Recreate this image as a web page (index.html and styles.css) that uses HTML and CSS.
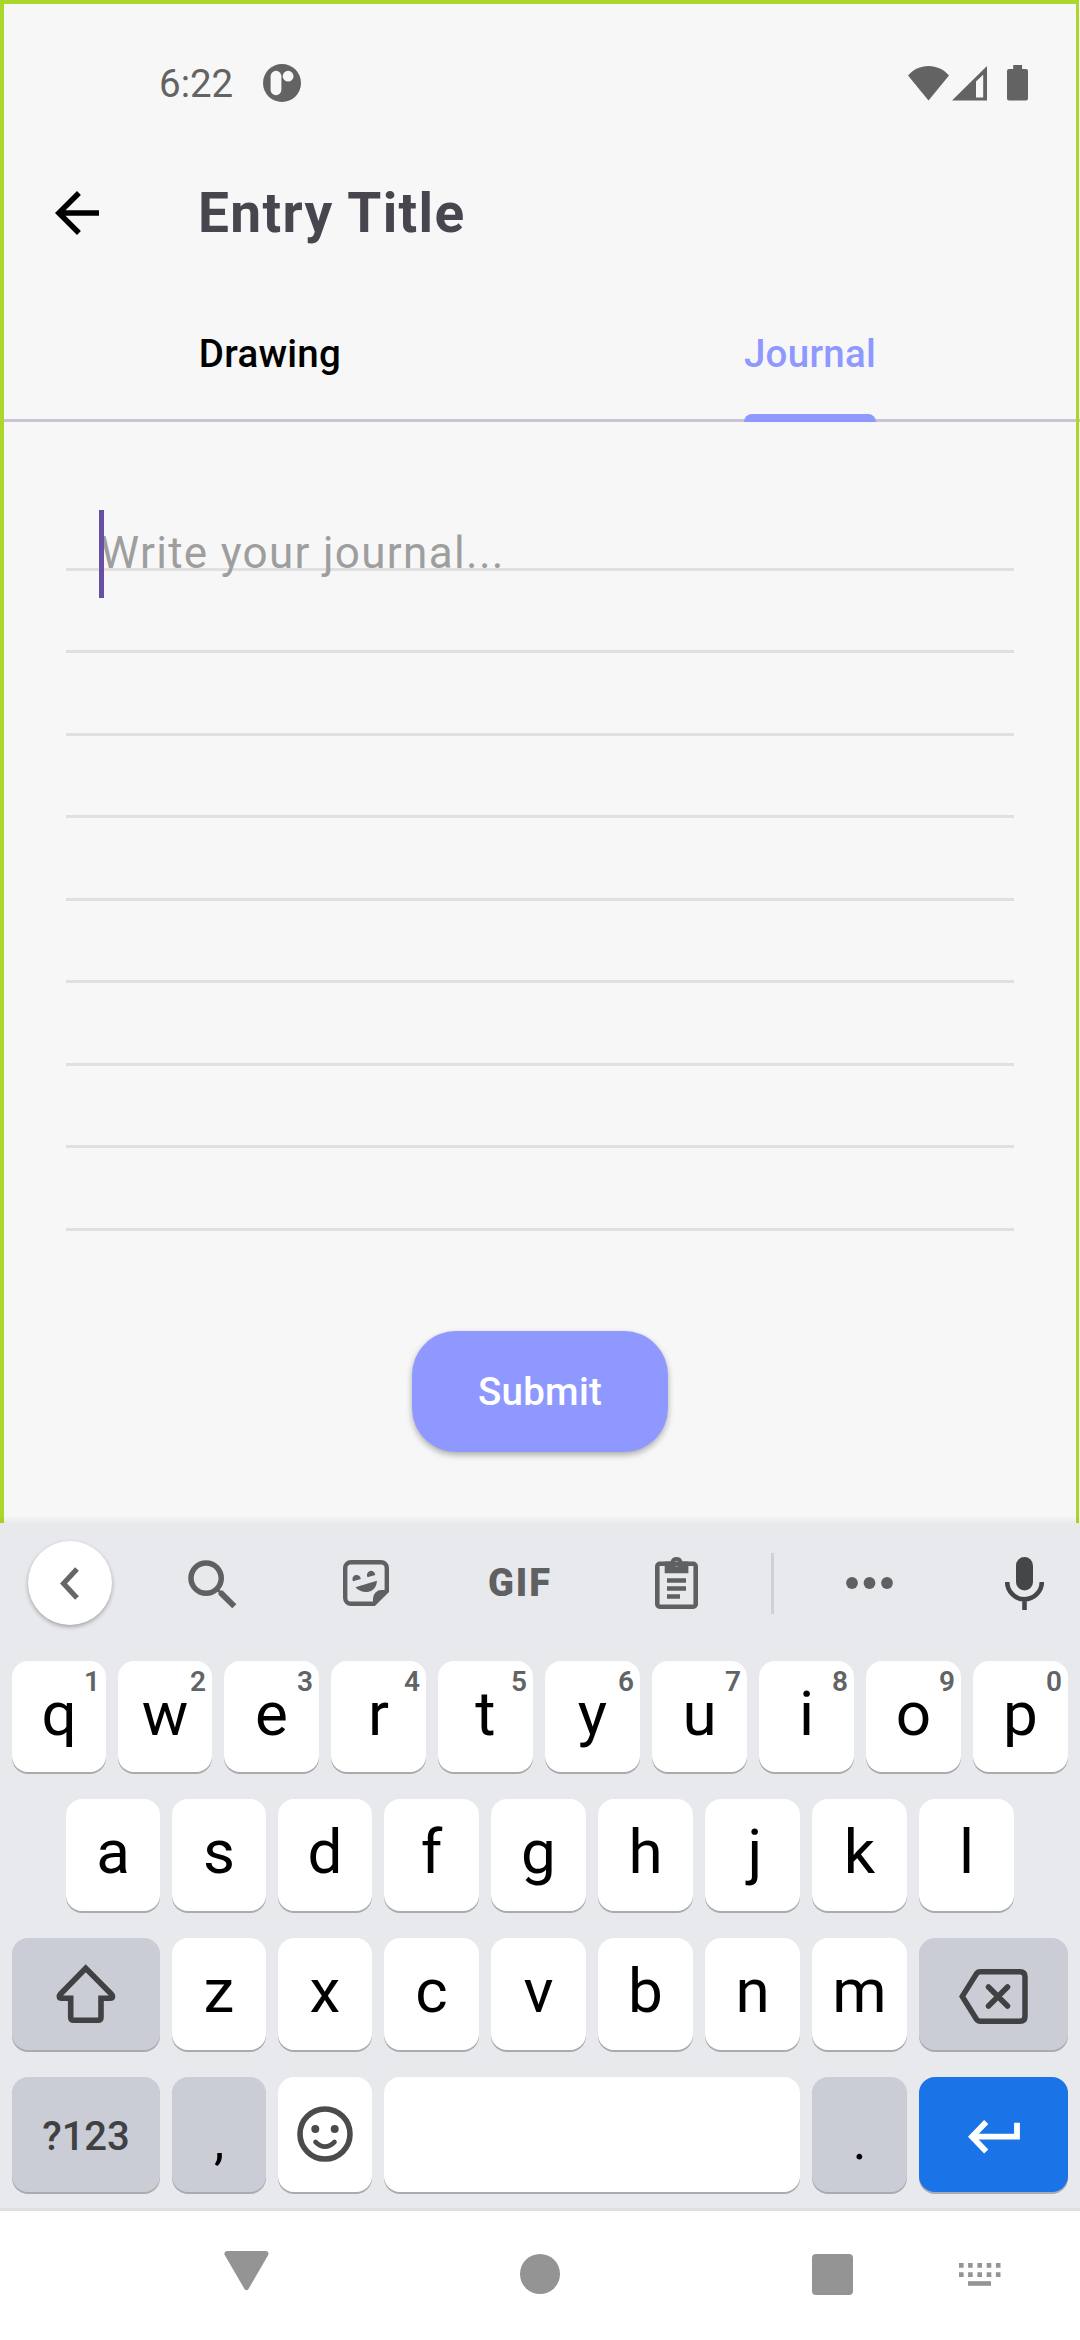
FILE: index.html
```html
<!DOCTYPE html>
<html lang="en">
<head>
<meta charset="utf-8">
<title>Entry Title</title>
<link rel="stylesheet" href="styles.css">
</head>
<body>
<div class="phone">
  <div class="app">
    <header class="status">
      <span class="clock">6:22</span>
      <svg class="notif" width="38" height="38" viewBox="0 0 38 38"><circle cx="19" cy="19" r="19" fill="#636363"/><rect x="7.6" y="6.8" width="10.8" height="24.4" rx="5.4" fill="#f7f7f7"/><circle cx="25.1" cy="12.2" r="5.4" fill="#f7f7f7"/></svg>
      <svg class="wifi" width="41" height="35" viewBox="0 0 41 35"><path d="M0 9.600C5 3.400 12.500 0 20.500 0S36 3.400 41 9.600L20.500 34.500z" fill="#636363"/></svg>
      <svg class="signal" width="35" height="35" viewBox="0 0 35 35"><path fill-rule="evenodd" d="M0 34.500 35 0v34.500zM24 15.500v16h7.200V8.800z" fill="#636363"/></svg>
      <svg class="battery" width="21" height="36" viewBox="0 0 21 36"><path d="M6.200 0h8.900v4H19a2 2 0 0 1 2 2v27.600a2 2 0 0 1-2 2H2a2 2 0 0 1-2-2V6a2 2 0 0 1 2-2h4.200z" fill="#636363"/></svg>
    </header>
    <div class="appbar">
      <svg class="back" width="66" height="66" viewBox="0 0 24 24"><path d="M20 11H7.830l5.590-5.590L12 4l-8 8 8 8 1.410-1.410L7.830 13H20z"/></svg>
      <h1 class="title">Entry Title</h1>
    </div>
    <nav class="tabs">
      <div class="tab"><span class="tab-label">Drawing</span></div>
      <div class="tab tab-active"><span class="tab-label">Journal</span></div>
    </nav>
    <main class="journal">
      <div class="paper">
        <div class="rule"></div><div class="rule"></div><div class="rule"></div>
        <div class="rule"></div><div class="rule"></div><div class="rule"></div>
        <div class="rule"></div><div class="rule"></div><div class="rule"></div>
        <div class="entry"><span class="placeholder">Write your journal...</span><span class="caret"></span></div>
      </div>
      <button class="submit">Submit</button>
    </main>
    <div class="frame"></div>
  </div>

  <section class="keyboard">
    <div class="tools">
      <div class="tool"><span class="collapse"><svg width="20" height="33" viewBox="0 0 20 33"><path d="M17 2 3.500 16.500 17 31" fill="none" stroke="#666" stroke-width="5.200"/></svg></span></div>
      <div class="tool tool-search"><svg width="66" height="66" viewBox="0 0 24 24"><path fill="#5f6062" d="M15.500 14h-.790l-.280-.270A6.470 6.470 0 0 0 16 9.500 6.500 6.500 0 1 0 9.500 16c1.610 0 3.090-.590 4.230-1.570l.270.280v.790l5 4.990L20.490 19zm-6 0C7.010 14 5 11.990 5 9.500S7.010 5 9.500 5 14 7.010 14 9.500 11.990 14 9.500 14z"/></svg></div>
      <div class="tool"><svg width="46" height="46" viewBox="0 0 46 46"><path d="M8 2.200h30a5.800 5.800 0 0 1 5.800 5.800v23L31 43.800H8A5.800 5.800 0 0 1 2.200 38V8A5.800 5.800 0 0 1 8 2.200z" fill="none" stroke="#5f6062" stroke-width="4.400"/><path d="M30 44v-5.500a8.500 8.500 0 0 1 8.500-8.500H44v2L32 44.500zM10 21.300a4.200 4.200 0 1 1 7.800-2.200zM24.500 17.200a4.200 4.200 0 1 1 7.800-2.200zM12.400 27.200 33.900 20.800C33.800 28 29 32 23.500 32c-4.500 0-8.600-1.700-11.100-4.800z" fill="#5f6062"/></svg></div>
      <div class="tool tool-gif">GIF</div>
      <div class="tool"><svg width="43" height="52" viewBox="0 0 43 52"><rect x="2.300" y="6.800" width="38.400" height="42.900" rx="2.500" fill="none" stroke="#5f6062" stroke-width="4.600"/><path fill-rule="evenodd" d="M9.700 4.500h5.800a6.300 6.300 0 0 1 12 0h5.900v11.800H9.700zM21.500 4.100a2.700 2.700 0 1 0 0 5.400 2.700 2.700 0 0 0 0-5.400z" fill="#5f6062"/><path d="M12 21.300h19v4.500H12zM12 29.200h19v4.500H12zM12 37.200h13v4.500H12z" fill="#5f6062"/></svg></div>
      <div class="tool"><span class="divider"></span></div>
      <div class="tool"><svg width="47" height="12" viewBox="0 0 47 12" fill="#5f6062"><circle cx="6" cy="6" r="5.900"/><circle cx="23.500" cy="6" r="5.900"/><circle cx="41" cy="6" r="5.900"/></svg></div>
      <div class="tool tool-mic"><svg width="39" height="53" viewBox="0 0 39 53"><rect x="11" y="0" width="17" height="33.500" rx="8.500" fill="#444648"/><path d="M2.200 25a17.300 17.300 0 0 0 34.600 0M19.500 42v11" fill="none" stroke="#444648" stroke-width="4.600"/></svg></div>
    </div>
    <div class="row row-1">
      <div class="key">q<span class="hint">1</span></div><div class="key">w<span class="hint">2</span></div><div class="key">e<span class="hint">3</span></div><div class="key">r<span class="hint">4</span></div><div class="key">t<span class="hint">5</span></div><div class="key">y<span class="hint">6</span></div><div class="key">u<span class="hint">7</span></div><div class="key">i<span class="hint">8</span></div><div class="key">o<span class="hint">9</span></div><div class="key">p<span class="hint">0</span></div>
    </div>
    <div class="row row-2">
      <div class="key">a</div><div class="key">s</div><div class="key">d</div><div class="key">f</div><div class="key">g</div><div class="key">h</div><div class="key key-j">j</div><div class="key">k</div><div class="key">l</div>
    </div>
    <div class="row row-3">
      <div class="key key-mod key-icon"><svg width="62" height="60" viewBox="0 0 62 60"><path d="M30.700 4.200 56.500 30.300c1.800 1.900 1.200 4-1.200 4H46v18.900q0 3-3 3H18.700q-3 0-3-3V34.300H6.500c-2.400 0-3-2.100-1.200-4z" fill="none" stroke="#404143" stroke-width="5.600"/></svg></div>
      <div class="key">z</div><div class="key">x</div><div class="key">c</div><div class="key">v</div><div class="key">b</div><div class="key">n</div><div class="key">m</div>
      <div class="key key-mod key-delete"><svg width="69" height="55" viewBox="0 0 69 55"><path d="M3.300 27.400 17.300 5q1.400-2.200 4-2.200H61q5 0 5 5v39.400q0 5-5 5H21.300q-2.600 0-4-2.200z" fill="none" stroke="#404143" stroke-width="5.500"/><path d="m29.500 18 19 19m0-19-19 19" stroke="#404143" stroke-width="5.500" stroke-linecap="round"/></svg></div>
    </div>
    <div class="row row-4">
      <div class="key key-mod key-sym">?123</div>
      <div class="key key-mod key-punct">,</div>
      <div class="key key-emoji"><svg width="56" height="56" viewBox="0 0 56 56"><circle cx="28" cy="28" r="25" fill="none" stroke="#4b4b4b" stroke-width="5.600"/><circle cx="18.300" cy="23" r="4" fill="#4b4b4b"/><circle cx="37.700" cy="23" r="4" fill="#4b4b4b"/><path d="M18.500 36q9.500 9.500 19 0" fill="none" stroke="#4b4b4b" stroke-width="4.600" stroke-linecap="round"/></svg></div>
      <div class="key"></div>
      <div class="key key-mod key-punct">.</div>
      <div class="key key-enter"><svg width="52" height="34" viewBox="0 0 52 34"><path d="M18.200 2 4 16.700l14.200 14.700M5 16.700h44V2.700" fill="none" stroke="#fff" stroke-width="5.800"/></svg></div>
    </div>
  </section>

  <footer class="navbar">
    <svg class="nav-back" width="45" height="40" viewBox="0 0 45 40"><path d="M3 0h39q3.500.500 2.200 4L24.500 38q-2 2.500-4 0L.700 4Q-.500.500 3 0z" fill="#949494"/></svg>
    <span class="nav-home"></span>
    <span class="nav-recent"></span>
    <svg class="nav-ime" width="42" height="23" viewBox="0 0 42 23"><path d="M2.300 0v14M11.400 0v14M20.700 0v14M30 0v14M39.200 0v14" stroke="#949494" stroke-width="4.600" stroke-dasharray="4.700 4.500"/><path d="M9 18.200h23v4.600H9z" fill="#949494"/></svg>
  </footer>
</div>
</body>
</html>
```
FILE: styles.css
```css
* { box-sizing: border-box; }

body {
  margin: 0;
  font-family: Roboto, "Liberation Sans", sans-serif;
  background: #fff;
}

svg { display: block; flex: none; }

.phone {
  width: 1080px;
  height: 2340px;
  display: flex;
  flex-direction: column;
  overflow: hidden;
}

/* App area */
.app {
  position: relative;
  height: 1523px;
  background: #f7f7f7;
}

.app::after {
  content: "";
  position: absolute;
  inset: auto 0 0;
  height: 8px;
  background: linear-gradient(rgba(0, 0, 0, 0), rgba(0, 0, 0, .05));
}

.frame {
  position: absolute;
  inset: 0 1px 0 0;
  border: solid #abd72b;
  border-width: 4px 3px 0 4px;
}

.status {
  height: 136px;
  padding: 30px 52px 0 159px;
  display: flex;
  align-items: center;
  color: #636363;
}

.clock { font-size: 38.5px; padding-top: 1px; }
.notif { margin-left: 30px; }
.wifi { margin-left: auto; }
.signal { margin-left: 3px; }
.battery { margin-left: 20px; }

.appbar {
  height: 154px;
  padding-left: 44px;
  display: flex;
  align-items: center;
}

.title {
  margin: 0 0 0 88px;
  font-size: 55px;
  font-weight: 700;
  letter-spacing: 1.375px;
  color: #49454f;
}

.tabs {
  height: 132px;
  display: flex;
  box-shadow: inset 0 -3px #cac4d0;
}

.tab {
  flex: 1;
  display: flex;
  justify-content: center;
  font-size: 38.5px;
  font-weight: 500;
  letter-spacing: .275px;
}

.tab-label {
  position: relative;
  display: flex;
  align-items: center;
  padding-bottom: 6px;
}

.tab-active { color: #8f98ff; }

.tab-active .tab-label::after {
  content: "";
  position: absolute;
  inset: auto 0 0;
  height: 8px;
  border-radius: 8px 8px 0 0;
  background: #8f98ff;
}

.journal {
  padding: 66.4px 66px 0;
  display: flex;
  flex-direction: column;
  align-items: center;
}

.paper { position: relative; width: 100%; }

.rule {
  height: 82.48px;
  border-bottom: 3px solid #e0e0e0;
}

.entry {
  position: absolute;
  top: 21.6px;
  left: 33px;
  height: 88px;
  display: flex;
  align-items: center;
}

.placeholder {
  padding: 0 0 2px 1px;
  font-size: 44px;
  letter-spacing: 1.32px;
  color: #9e9e9e;
}

.caret {
  position: absolute;
  left: 0;
  width: 5px;
  height: 88px;
  background: #6750a4;
}

.submit {
  width: 256px;
  height: 121px;
  margin-top: 100.3px;
  padding: 0;
  border: 0;
  border-radius: 44px;
  background: #8f98ff;
  color: #fff;
  font: 500 38.5px Roboto, "Liberation Sans", sans-serif;
  letter-spacing: .275px;
  box-shadow: 0 3px 6px rgba(0, 0, 0, .3);
}

/* Keyboard */
.keyboard {
  height: 688px;
  background: #e8e9ed;
  border-bottom: 3px solid #dedfdf;
}

.tools {
  height: 138px;
  padding-bottom: 18px;
  display: grid;
  grid-template-columns: 139px 148px 158px 150px 163px 28px 167px 127px;
}

.tool {
  display: flex;
  align-items: center;
  justify-content: center;
}

.tool-search { padding-top: 4px; }
.tool-mic { padding-left: 15px; }

.tool-gif {
  font-size: 38px;
  font-weight: 900;
  letter-spacing: 2px;
  color: #5f6062;
}

.collapse {
  width: 84px;
  height: 84px;
  border-radius: 50%;
  background: #fff;
  display: flex;
  align-items: center;
  justify-content: center;
  box-shadow: 0 2px 4px rgba(0, 0, 0, .3);
}

.divider { width: 3px; height: 61px; background: #cfd1d5; }

.row {
  display: grid;
  gap: 12px;
  padding: 0 12px;
  height: 112px;
  margin-bottom: 27px;
}

.row-1 { height: 111px; grid-template-columns: repeat(2, 94px) repeat(8, 95px); }
.row-2 { padding: 0 66px; grid-template-columns: repeat(3, 94px) repeat(6, 95px); }
.row-3 { grid-template-columns: 148px repeat(2, 94px) repeat(5, 95px) 149px; }
.row-4 { height: 115px; margin-bottom: 0; grid-template-columns: 148px 94px 94px 416px 95px 149px; }

.key {
  position: relative;
  min-width: 0;
  padding-bottom: 6px;
  display: flex;
  align-items: center;
  justify-content: center;
  border-radius: 16px;
  background: #fff;
  box-shadow: 0 2px #aaabad;
  font-size: 62px;
  line-height: 1;
  color: #000;
}

.key-mod { background: #cbcdd6; }
.key-j { padding-left: 5px; }
.key-icon { padding-bottom: 0; }
.key-delete { padding: 4px 0 0; }
.key-sym { padding: 4px 0 0; font-size: 40px; font-weight: 500; color: #404143; }
.key-punct { padding: 15px 0 0; font-size: 52px; }
.key-emoji { padding-bottom: 2px; }
.key-enter { padding: 4px 0 0; background: #1b73e8; }

.hint {
  position: absolute;
  top: 7px;
  right: 6px;
  font-size: 28px;
  font-weight: 600;
  color: #616365;
}

/* System navigation */
.navbar {
  flex: 1;
  display: flex;
  align-items: flex-start;
  padding: 40px 0 0 224px;
  background: #fff;
}

.nav-home {
  width: 40px;
  height: 40px;
  margin: 3px 0 0 251px;
  border-radius: 50%;
  background: #949494;
}

.nav-recent {
  width: 41px;
  height: 41px;
  margin: 3px 0 0 252px;
  border-radius: 4px;
  background: #949494;
}

.nav-ime { margin: 12px 0 0 106px; }
```
